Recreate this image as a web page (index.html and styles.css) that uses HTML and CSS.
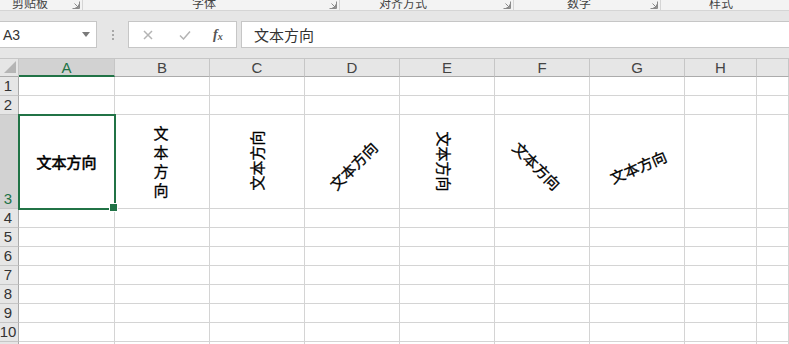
FILE: index.html
```html
<!DOCTYPE html>
<html lang="zh-CN">
<head>
    <meta charset="UTF-8">
    <title>文本方向</title>
    <link rel="stylesheet" href="styles.css">
</head>
<body>
    <!-- ribbon group captions (cut at the top) -->
    <div class="ribbon">
        <div class="group g-clip"><span class="group-label">剪贴板</span><svg class="launcher" viewBox="0 0 8 8"><path d="M0.5 7.5h7v-7" /><path d="M2.5 2.5l4 4M3.5 6.5h3v-3" /></svg></div>
        <div class="group g-font"><span class="group-label">字体</span><svg class="launcher" viewBox="0 0 8 8"><path d="M0.5 7.5h7v-7" /><path d="M2.5 2.5l4 4M3.5 6.5h3v-3" /></svg></div>
        <div class="group g-align"><span class="group-label">对齐方式</span><svg class="launcher" viewBox="0 0 8 8"><path d="M0.5 7.5h7v-7" /><path d="M2.5 2.5l4 4M3.5 6.5h3v-3" /></svg></div>
        <div class="group g-number"><span class="group-label">数字</span><svg class="launcher" viewBox="0 0 8 8"><path d="M0.5 7.5h7v-7" /><path d="M2.5 2.5l4 4M3.5 6.5h3v-3" /></svg></div>
        <div class="group g-style"><span class="group-label">样式</span></div>
    </div>

    <!-- formula bar -->
    <div class="formula-row">
        <div class="name-box">
            <span>A3</span>
            <svg class="drop" viewBox="0 0 8 5"><path d="M0 0h8L4 5z" /></svg>
        </div>
        <div class="grip"><i></i><i></i><i></i></div>
        <div class="fx-box">
            <svg class="fx-icon" viewBox="0 0 10 10"><path d="M1 1l8 8M9 1l-8 8" /></svg>
            <svg class="fx-icon" viewBox="0 0 12 10"><path d="M1 5.5l3.5 3.5L11 1.5" /></svg>
            <span class="fx-label">f<sub>x</sub></span>
        </div>
        <div class="formula-input">文本方向</div>
    </div>

    <!-- worksheet -->
    <div class="sheet">
        <div class="corner"><svg viewBox="0 0 12 12"><path d="M12 0v12H0z" /></svg></div>
        <div class="ch selected">A</div><div class="ch">B</div><div class="ch">C</div><div class="ch">D</div><div class="ch">E</div><div class="ch">F</div><div class="ch">G</div><div class="ch">H</div><div class="ch"></div>

        <div class="rh">1</div><div class="c"></div><div class="c"></div><div class="c"></div><div class="c"></div><div class="c"></div><div class="c"></div><div class="c"></div><div class="c"></div><div class="c"></div>
        <div class="rh">2</div><div class="c"></div><div class="c"></div><div class="c"></div><div class="c"></div><div class="c"></div><div class="c"></div><div class="c"></div><div class="c"></div><div class="c"></div>

        <div class="rh selected">3</div>
        <div class="c active"><span class="txt horiz">文本方向</span></div>
        <div class="c"><span class="txt stack">文本方向</span></div>
        <div class="c"><span class="txt rot-up">文本方向</span></div>
        <div class="c"><span class="txt rot-up45">文本方向</span></div>
        <div class="c"><span class="txt rot-down">文本方向</span></div>
        <div class="c"><span class="txt rot-down45">文本方向</span></div>
        <div class="c"><span class="txt rot-slight">文本方向</span></div>
        <div class="c"></div>
        <div class="c"></div>

        <div class="rh">4</div><div class="c"></div><div class="c"></div><div class="c"></div><div class="c"></div><div class="c"></div><div class="c"></div><div class="c"></div><div class="c"></div><div class="c"></div>
        <div class="rh">5</div><div class="c"></div><div class="c"></div><div class="c"></div><div class="c"></div><div class="c"></div><div class="c"></div><div class="c"></div><div class="c"></div><div class="c"></div>
        <div class="rh">6</div><div class="c"></div><div class="c"></div><div class="c"></div><div class="c"></div><div class="c"></div><div class="c"></div><div class="c"></div><div class="c"></div><div class="c"></div>
        <div class="rh">7</div><div class="c"></div><div class="c"></div><div class="c"></div><div class="c"></div><div class="c"></div><div class="c"></div><div class="c"></div><div class="c"></div><div class="c"></div>
        <div class="rh">8</div><div class="c"></div><div class="c"></div><div class="c"></div><div class="c"></div><div class="c"></div><div class="c"></div><div class="c"></div><div class="c"></div><div class="c"></div>
        <div class="rh">9</div><div class="c"></div><div class="c"></div><div class="c"></div><div class="c"></div><div class="c"></div><div class="c"></div><div class="c"></div><div class="c"></div><div class="c"></div>
        <div class="rh">10</div><div class="c"></div><div class="c"></div><div class="c"></div><div class="c"></div><div class="c"></div><div class="c"></div><div class="c"></div><div class="c"></div><div class="c"></div>
        <div class="rh">11</div><div class="c"></div><div class="c"></div><div class="c"></div><div class="c"></div><div class="c"></div><div class="c"></div><div class="c"></div><div class="c"></div><div class="c"></div>
    </div>
</body>
</html>
```

FILE: styles.css
```css
* {
    margin: 0;
    padding: 0;
    box-sizing: border-box;
}

body {
    width: 789px;
    height: 344px;
    overflow: hidden;
    background: #e6e6e6;
    font-family: "Liberation Sans", "Noto Sans CJK SC", sans-serif;
    color: #333;
}

/* ribbon captions */
.ribbon {
    height: 11px;
    display: flex;
    background: #f3f3f3;
    border-bottom: 1px solid #d5d5d5;
    overflow: hidden;
}

.group {
    height: 10px;
    display: flex;
    align-items: flex-end;
    border-right: 1px solid #d5d5d5;
}

.group-label {
    font-family: "Noto Sans CJK SC", sans-serif;
    font-size: 12px;
    line-height: 12px;
    color: #444;
    margin-bottom: 1px;
    white-space: nowrap;
}

.launcher {
    width: 8px;
    height: 8px;
    margin-left: auto;
    margin-right: 2px;
    margin-bottom: 1px;
    fill: none;
    stroke: #8a8a8a;
    stroke-width: 1;
}

.g-clip { width: 83px; }
.g-clip .group-label { margin-left: 12px; }
.g-font { width: 257px; }
.g-font .group-label { margin-left: 109px; }
.g-align { width: 174px; }
.g-align .group-label { margin-left: 39px; }
.g-number { width: 147px; }
.g-number .group-label { margin-left: 53px; }
.g-style { flex: 1; border-right: none; }
.g-style .group-label { margin-left: 48px; }

/* formula bar */
.formula-row {
    display: flex;
    align-items: stretch;
    padding: 10px 0 10px;
    border-bottom: 1px solid #c6c6c6;
}

.formula-row > div {
    height: 27px;
}

.name-box {
    width: 97px;
    background: #fff;
    border: 1px solid #c6c6c6;
    border-left: none;
    display: flex;
    align-items: center;
    padding-left: 3px;
    font-size: 14px;
    color: #333;
}

.drop {
    width: 8px;
    height: 5px;
    margin-left: auto;
    margin-right: 6px;
    fill: #7a7a7a;
}

.grip {
    width: 31px;
    display: flex;
    flex-direction: column;
    justify-content: center;
    align-items: center;
    gap: 2px;
}

.grip i {
    display: block;
    width: 2px;
    height: 2px;
    background: #a8a8a8;
}

.fx-box {
    width: 109px;
    background: #fff;
    border: 1px solid #c6c6c6;
    display: flex;
    align-items: center;
    padding-left: 14px;
}

.fx-icon {
    width: 10px;
    height: 10px;
    fill: none;
    stroke: #b4b4b4;
    stroke-width: 1.5;
    margin-right: 26px;
}

.fx-icon + .fx-icon {
    width: 12px;
    margin-right: 22px;
}

.fx-label {
    font-family: "Liberation Serif", serif;
    font-style: italic;
    font-weight: bold;
    font-size: 14px;
    color: #555;
}

.fx-label sub {
    font-size: 10px;
    vertical-align: -1px;
}

.formula-input {
    flex: 1;
    margin-left: 4px;
    background: #fff;
    border: 1px solid #c6c6c6;
    border-right: none;
    display: flex;
    align-items: center;
    padding-left: 12px;
    font-family: "Noto Sans CJK SC", sans-serif;
    font-size: 15px;
    color: #333;
}

/* worksheet grid */
.sheet {
    display: grid;
    grid-template-columns: 19px 96px repeat(6, 95px) 72px 1fr;
    grid-template-rows: 18px 19px 19px 94px repeat(8, 19px);
    background: #fff;
}

.corner {
    background: #e6e6e6;
    border-right: 1px solid #c6c6c6;
    border-bottom: 1px solid #ababab;
    display: flex;
    align-items: flex-end;
    justify-content: flex-end;
    padding: 0 2px 3px 0;
}

.corner svg {
    width: 12px;
    height: 12px;
    fill: #b5b5b5;
}

.ch {
    background: #e6e6e6;
    border-right: 1px solid #c6c6c6;
    border-bottom: 1px solid #ababab;
    font-size: 15px;
    line-height: 17px;
    text-align: center;
    color: #444;
}

.ch.selected {
    background: #d2d2d2;
    color: #217346;
    border-bottom: 2px solid #217346;
}

.rh {
    background: #e6e6e6;
    border-right: 1px solid #ababab;
    border-bottom: 1px solid #c6c6c6;
    display: flex;
    align-items: flex-end;
    justify-content: center;
    padding-right: 2px;
    font-size: 15px;
    line-height: 18px;
    color: #333;
}

.rh.selected {
    background: #d2d2d2;
    color: #217346;
}

.c {
    border-right: 1px solid #d4d4d4;
    border-bottom: 1px solid #d4d4d4;
    display: flex;
    align-items: center;
    justify-content: center;
}

.c.active {
    position: relative;
    z-index: 2;
    outline: 2px solid #217346;
    outline-offset: -1px;
}

.c.active::after {
    content: "";
    position: absolute;
    right: -4px;
    bottom: -4px;
    width: 7px;
    height: 7px;
    background: #217346;
    border: 1px solid #fff;
}

/* cell text in its different orientations */
.txt {
    font-family: "Noto Sans CJK SC", sans-serif;
    font-size: 15px;
    line-height: 15px;
    color: #000;
    white-space: nowrap;
    -webkit-text-stroke: 0.3px #000;
}

.horiz {
    -webkit-text-stroke: 0.6px #000;
}

.stack {
    writing-mode: vertical-rl;
    text-orientation: upright;
    letter-spacing: 4px;
    transform: translate(-1px, 2px);
}

.rot-up {
    transform: translate(-1px, -1px) rotate(-90deg);
}

.rot-up45 {
    transform: translate(1px, 4px) rotate(-45deg);
}

.rot-down {
    transform: translate(-3px, 0) rotate(90deg);
}

.rot-down45 {
    transform: translate(-5px, 4px) rotate(45deg);
}

.rot-slight {
    transform: translate(1px, 5px) rotate(-23deg);
}
```
